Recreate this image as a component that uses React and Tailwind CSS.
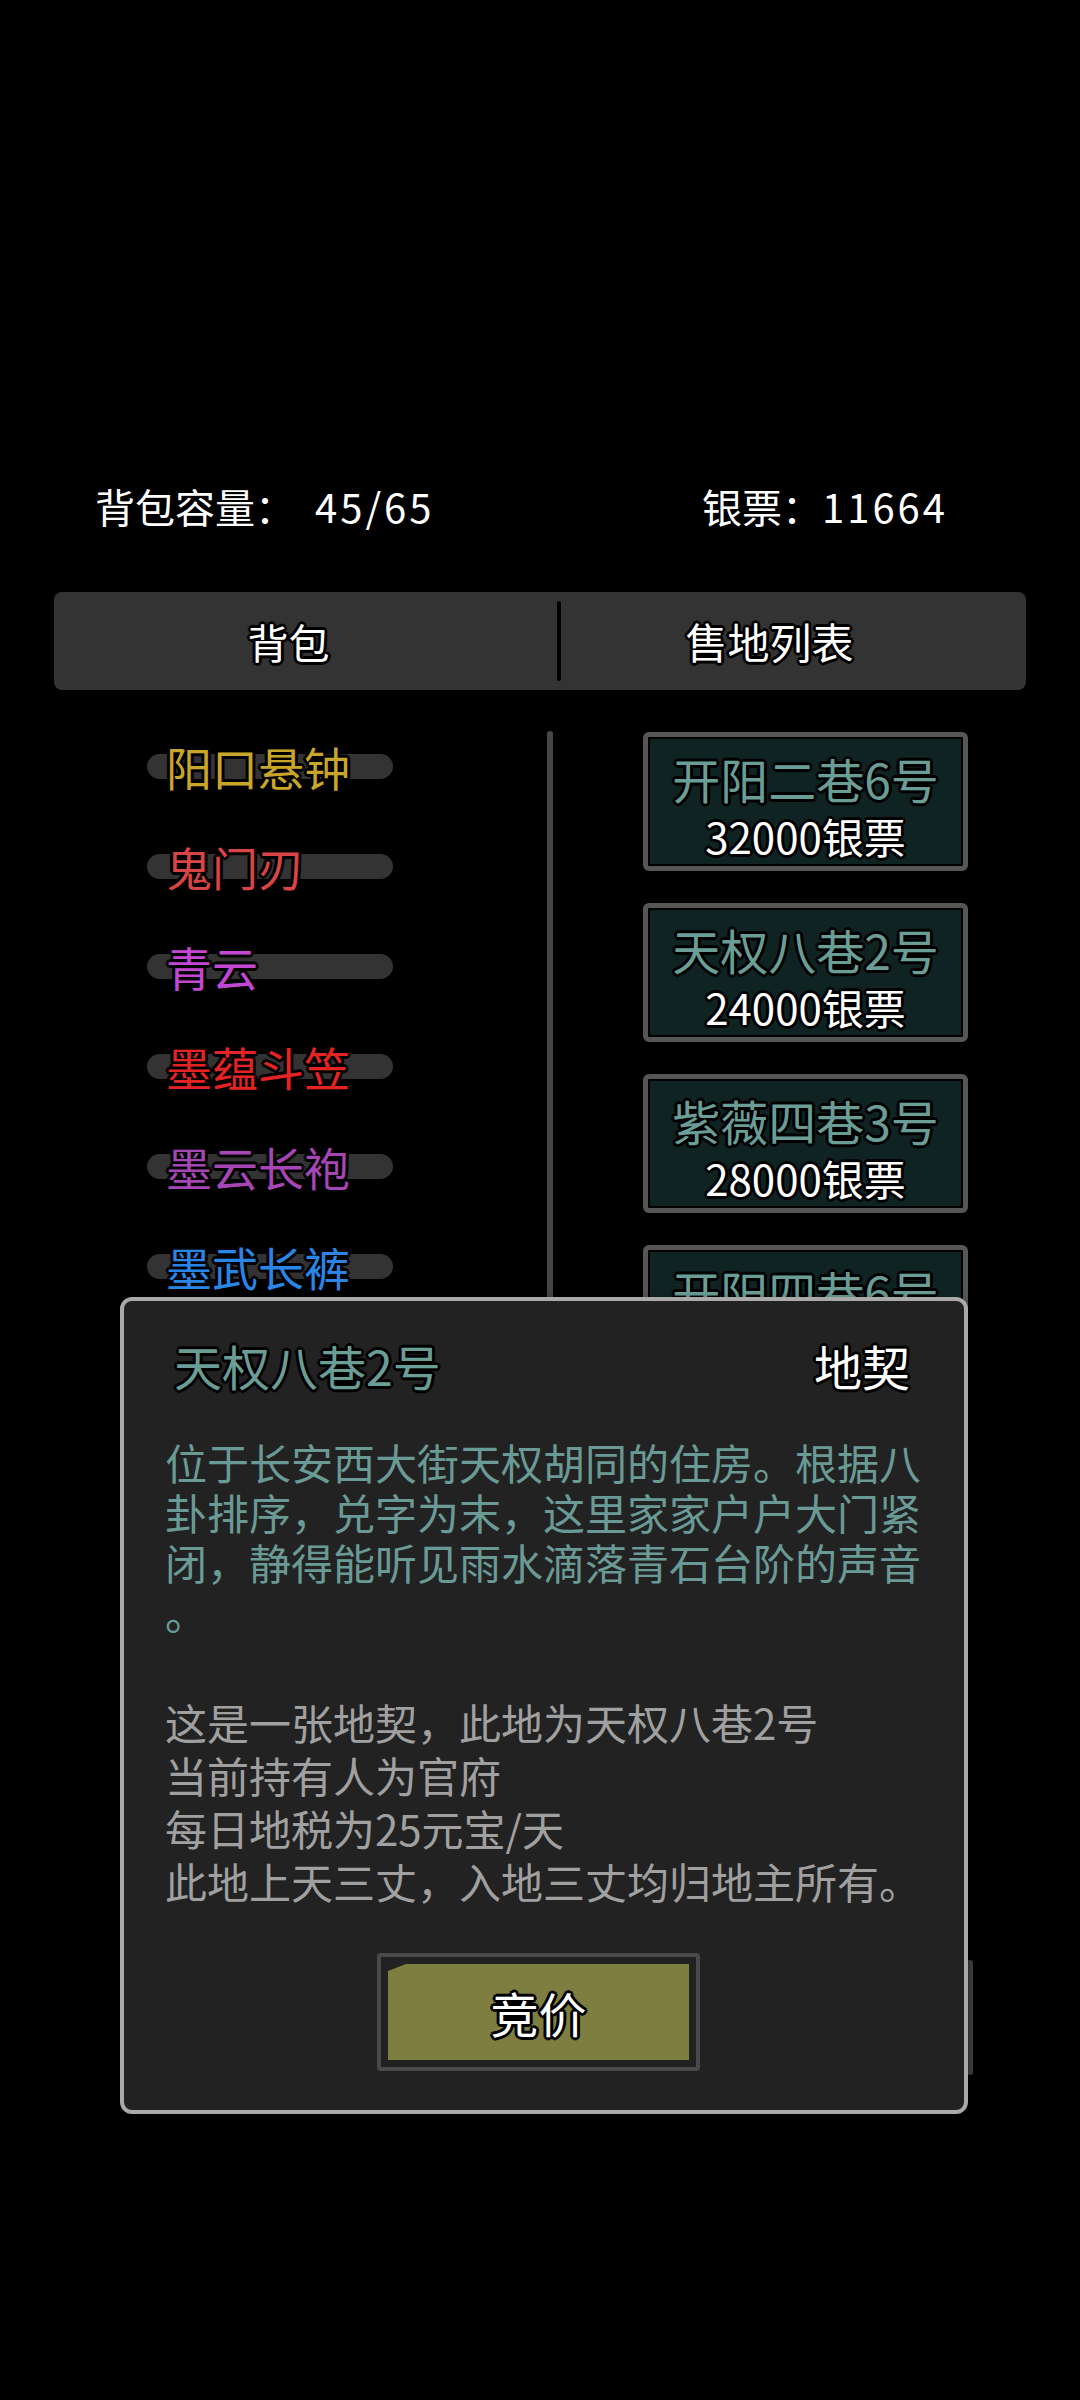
import React from 'react';

// black outline used by the game's labels
const outline =
  '[text-shadow:-2px_-2px_0_#000,2px_-2px_0_#000,-2px_2px_0_#000,2px_2px_0_#000,0_-3px_0_#000,0_3px_0_#000,-3px_0_0_#000,3px_0_0_#000]';

const bagItems = [
  { name: '阳口悬钟', color: 'text-[#c9a52a]' },
  { name: '鬼门刃', color: 'text-[#d94444]' },
  { name: '青云', color: 'text-[#c347d3]' },
  { name: '墨蕴斗笠', color: 'text-[#e62323]' },
  { name: '墨云长袍', color: 'text-[#a646b5]' },
  { name: '墨武长裤', color: 'text-[#2a86e6]' },
];

const lands = [
  { name: '开阳二巷6号', price: '32000银票' },
  { name: '天权八巷2号', price: '24000银票' },
  { name: '紫薇四巷3号', price: '28000银票' },
  { name: '开阳四巷6号', price: null },
];

const BagRow = ({ name, color }) => (
  <div className="grid h-[100px] items-center">
    <div className="col-start-1 row-start-1 ml-[147px] h-[25px] w-[246px] rounded-full bg-[#333]" />
    <div
      className={`col-start-1 row-start-1 ml-[166px] text-[46px] leading-[56px] ${color} ${outline}`}
    >
      {name}
    </div>
  </div>
);

const LandCard = ({ name, price }) => (
  <div className="h-[139px] w-[325px] rounded-[6px] border-[5px] border-[#565656] bg-[#102323] shadow-[inset_0_0_0_2px_#000] flex flex-col items-center pt-[12px]">
    <div className={`text-[48px] leading-[58px] text-[#6b9d97] ${outline}`}>{name}</div>
    {price && (
      <div className={`text-[42px] leading-[58px] text-white ${outline}`}>{price}</div>
    )}
  </div>
);

export default function App() {
  return (
    <div className="relative w-[1080px] h-[2400px] overflow-hidden bg-black font-['Noto_Sans_CJK_SC','Noto_Sans',sans-serif]">
      {/* capacity / money */}
      <div className="flex pt-[482px] text-[40px] leading-[48px] text-white">
        <div className="w-[702px] pl-[95px]">
          背包容量：<span className="ml-[20px] tracking-[3px]">45/65</span>
        </div>
        <div>
          银票：<span className="tracking-[3px]">11664</span>
        </div>
      </div>

      {/* tabs */}
      <div className="mx-[54px] mt-[62px] flex h-[98px] items-center rounded-[8px] bg-[#333]">
        <div className={`flex w-[503px] justify-center pr-[34px] text-[41px] leading-[50px] text-white ${outline}`}>
          背包
        </div>
        <div className="h-[80px] w-[4px] rounded-full bg-black" />
        <div className={`flex flex-1 justify-center pr-[48px] text-[42px] leading-[50px] text-white ${outline}`}>
          售地列表
        </div>
      </div>

      {/* lists */}
      <div className="flex">
        <div className="w-[547px] pt-[26px]">
          {bagItems.map((it) => (
            <BagRow key={it.name} {...it} />
          ))}
        </div>
        <div className="mt-[41px] h-[1200px] w-[6px] rounded-t-full bg-[#464646]" />
        <div className="ml-[90px] flex flex-col gap-[32px] pt-[42px]">
          {lands.map((l) => (
            <LandCard key={l.name} {...l} />
          ))}
        </div>
      </div>

      {/* right list scrollbar peeking out behind the popup */}
      <div className="absolute left-[967px] top-[1960px] h-[115px] w-[6px] rounded-[3px] bg-[#444]" />

      {/* detail popup */}
      <div className="absolute left-[120px] top-[1297px] h-[817px] w-[848px] rounded-[12px] border-[4px] border-[#a9a9a9] bg-[#222] px-[41px] pt-[34px] shadow-[0_4px_10px_rgba(0,0,0,0.6)]">
        <div className="flex items-center justify-between pr-[13px]">
          <div className={`ml-[9px] text-[48px] leading-[60px] text-[#6b9d97] ${outline}`}>天权八巷2号</div>
          <div className={`text-[48px] leading-[60px] text-white ${outline}`}>地契</div>
        </div>

        <div className="mt-[42px] text-[42px] leading-[50px] text-[#6a9a96]">
          <div>位于长安西大街天权胡同的住房。根据八</div>
          <div>卦排序，兑字为末，这里家家户户大门紧</div>
          <div>闭，静得能听见雨水滴落青石台阶的声音</div>
          <div>。</div>
        </div>

        <div className="mt-[58px] text-[42px] leading-[53px] text-[#a0a0a0]">
          <div>这是一张地契，此地为天权八巷2号</div>
          <div>当前持有人为官府</div>
          <div>每日地税为25元宝/天</div>
          <div>此地上天三丈，入地三丈均归地主所有。</div>
        </div>

        <div className="ml-[212px] mt-[46px] h-[118px] w-[323px] rounded-[4px] border-[4px] border-[#4a4a4a] bg-[#222] p-[7px]">
          <div className="flex h-full items-center justify-center bg-[#7e7e40] [clip-path:polygon(18px_0,100%_0,100%_100%,0_100%,0_7px)]">
            <span className={`text-[48px] leading-[56px] text-white ${outline}`}>竞价</span>
          </div>
        </div>
      </div>
    </div>
  );
}
